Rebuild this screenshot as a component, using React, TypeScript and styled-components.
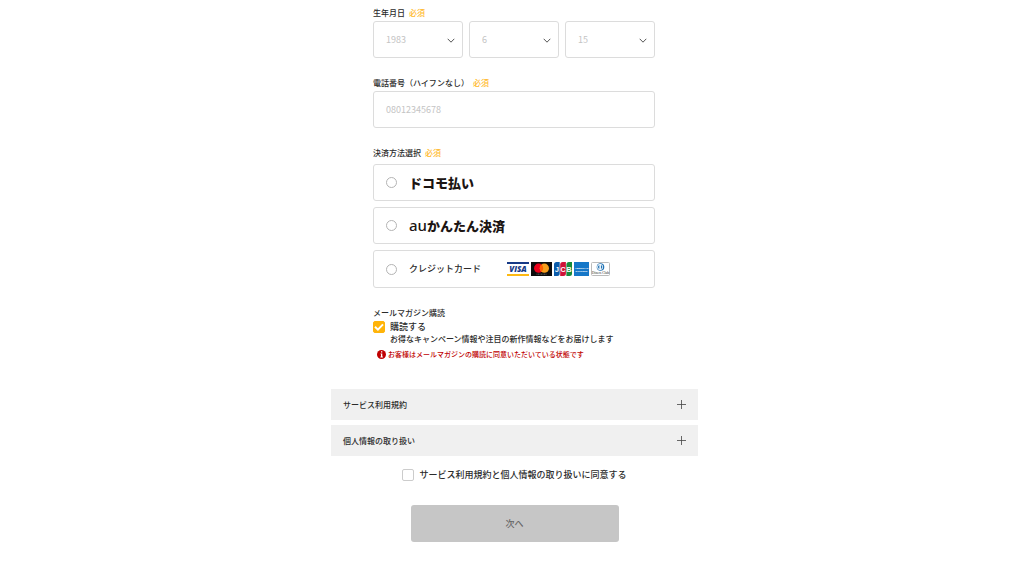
import React, { useState } from "react";
import styled, { createGlobalStyle } from "styled-components";

const GlobalStyle = createGlobalStyle`
  *, *::before, *::after { box-sizing: border-box; }
  body {
    margin: 0;
    background: #fff;
    color: #2b2b2b;
    font-family: "Noto Sans CJK JP", "Noto Sans", sans-serif;
    font-size: 8px;
    font-weight: 500;
    line-height: 12px;
  }
  button, input, select { font: inherit; color: inherit; margin: 0; }
`;

const Page = styled.main`
  display: flex;
  flex-direction: column;
  align-items: center;
  padding: 7px 0 27px 5px;
`;

const Form = styled.form`
  width: 100%;
  max-width: 367px;
  display: flex;
  flex-direction: column;
`;

const Fields = styled.div`
  display: flex;
  flex-direction: column;
  gap: 19px;
  padding: 0 43px 0 42px;
`;

const Group = styled.fieldset<{ $gap?: number }>`
  display: flex;
  flex-direction: column;
  gap: ${(p) => p.$gap ?? 2}px;
  min-width: 0;
  margin: 0;
  padding: 0;
  border: 0;
`;

const Label = styled.label`
  display: flex;
  gap: 4px;
`;

const Required = styled.span`
  color: #ffb92a;
`;

const SelectRow = styled.div`
  display: grid;
  grid-template-columns: repeat(3, 1fr);
  gap: 6px;
`;

const SelectBox = styled.div`
  position: relative;

  svg {
    position: absolute;
    right: 8px;
    top: 50%;
    margin-top: -2px;
    pointer-events: none;
  }
`;

const Select = styled.select`
  appearance: none;
  width: 100%;
  height: 37px;
  padding: 0 12px;
  border: 1px solid #dcdcdc;
  border-radius: 3px;
  background: #fff;
  color: #c4c4c4;
  font-size: 9px;
  font-weight: 400;
`;

const TextInput = styled.input`
  width: 100%;
  height: 37px;
  padding: 0 12px;
  border: 1px solid #dcdcdc;
  border-radius: 3px;
  background: #fff;
  font-size: 9px;
  font-weight: 400;

  &::placeholder { color: #c4c4c4; opacity: 1; }
`;

const Options = styled.div`
  display: flex;
  flex-direction: column;
  gap: 6px;
`;

const Option = styled.label<{ $tall?: boolean }>`
  display: flex;
  align-items: center;
  height: ${(p) => (p.$tall ? 38 : 37)}px;
  padding: 0 12px;
  gap: 12px;
  border: 1px solid #dcdcdc;
  border-radius: 3px;
  font-size: 9px;
`;

const Radio = styled.input`
  appearance: none;
  flex: none;
  width: 11px;
  height: 11px;
  border: 1px solid #b4b4b4;
  border-radius: 50%;
  background: #fff;

  &:checked { border: 3px solid #ffb400; }
`;

const Brand = styled.span`
  color: #1c1513;
  font-size: 13px;
  font-weight: 900;
  line-height: 16px;
`;

const BrandPrefix = styled.span`
  font-family: "Noto Sans", sans-serif;
  font-size: 15px;
  font-weight: 500;
`;

const Cards = styled.span`
  display: flex;
  gap: 2px;
  margin-left: 14px;
`;

const CheckLabel = styled.label`
  display: flex;
  align-items: center;
  gap: 5px;
  font-size: 9px;
`;

const Checkbox = styled.input`
  appearance: none;
  flex: none;
  width: 12px;
  height: 12px;
  border: 1px solid #ccc;
  border-radius: 2px;
  background: #fff;

  &:checked {
    border-color: #ffb40a;
    background: #ffb40a;
  }
`;

const CheckMark = styled.span`
  position: relative;
  display: flex;

  svg {
    position: absolute;
    inset: 0;
    pointer-events: none;
  }
`;

const Magazine = styled.section`
  display: flex;
  flex-direction: column;
  gap: 2px;
`;

const Note = styled.p`
  margin: 0;
  padding-left: 17px;
  line-height: 8px;
`;

const Notice = styled.p`
  display: flex;
  align-items: center;
  gap: 2px;
  margin: 3px 0 0;
  padding-left: 4px;
  color: #c00000;
  font-size: 7px;
`;

const Accordion = styled.div`
  display: flex;
  flex-direction: column;
  gap: 5px;
  margin-top: 29px;
`;

const AccordionButton = styled.button`
  display: flex;
  align-items: center;
  justify-content: space-between;
  height: 31px;
  padding: 0 12px;
  border: 0;
  background: #f0f0f0;
  text-align: left;
`;

const Agreement = styled.div`
  display: flex;
  justify-content: center;
  margin-top: 13px;
`;

const NextButton = styled.button`
  align-self: center;
  width: 100%;
  max-width: 208px;
  height: 37px;
  margin-top: 24px;
  border: 0;
  border-radius: 3px;
  background: #c6c6c6;
  color: #666;
  font-size: 9px;
`;

const Chevron = () => (
  <svg width="8" height="5" viewBox="0 0 8 5" fill="none" stroke="#555" aria-hidden="true">
    <path d="M.7.8 4 4.2 7.3.8" />
  </svg>
);

const Plus = () => (
  <svg width="9" height="9" viewBox="0 0 9 9" stroke="#444" strokeWidth=".8" aria-hidden="true">
    <path d="M4.5 0v9M0 4.5h9" />
  </svg>
);

const Tick = () => (
  <svg width="12" height="12" viewBox="0 0 12 12" fill="none" stroke="#fff" strokeWidth="2" aria-hidden="true">
    <path d="M2 5.8 4.9 8.6 10 3.4" />
  </svg>
);

const Alert = () => (
  <svg width="9" height="9" viewBox="0 0 9 9" aria-hidden="true">
    <circle cx="4.5" cy="4.5" r="4.5" fill="#c00000" />
    <path d="M4 1.3h1.3v1.3H4zM3.5 3.4h1.8v3.1h.6v.9H3.4v-.9H4V4.3h-.5z" fill="#fff" />
  </svg>
);

const Visa = () => (
  <svg width="22" height="14" viewBox="0 0 22 14" role="img" aria-label="VISA">
    <path fill="#fff" d="M0 0h22v14H0z" />
    <path fill="#173a86" d="M0 0h22v2H0z" />
    <path fill="#fdb913" d="M0 12h22v2H0z" />
    <text x="11" y="9.9" textAnchor="middle" fill="#173a86" fontFamily="Open Sans, sans-serif" fontSize="8" fontStyle="italic" fontWeight="800">VISA</text>
  </svg>
);

const Mastercard = () => (
  <svg width="21" height="14" viewBox="0 0 21 14" role="img" aria-label="Mastercard">
    <path fill="#0c0c0c" d="M0 0h21v14H0z" />
    <circle cx="7.6" cy="6.2" r="4.6" fill="#eb001b" />
    <circle cx="13.4" cy="6.2" r="4.6" fill="#f79e1b" />
    <path fill="#ff5f00" d="M10.5 2.6a4.6 4.6 0 0 1 0 7.2 4.6 4.6 0 0 1 0-7.2z" />
    <path stroke="#777" strokeWidth=".8" strokeDasharray="1 .5" d="M5.5 12.2h10" />
  </svg>
);

const Jcb = () => (
  <svg width="18" height="14" viewBox="0 0 18 14" role="img" aria-label="JCB">
    <path fill="#0b5cab" d="M2.5 0h3.2v11.5A2.5 2.5 0 0 1 3.2 14H0V2.5A2.5 2.5 0 0 1 2.5 0z" />
    <path fill="#cf1237" d="M8.7 0h3.2v11.5A2.5 2.5 0 0 1 9.4 14H6.2V2.5A2.5 2.5 0 0 1 8.7 0z" />
    <path fill="#168b3c" d="M14.9 0H18v11.5a2.5 2.5 0 0 1-2.5 2.5h-3.1V2.5A2.5 2.5 0 0 1 14.9 0z" />
    <g fill="#fff" fontFamily="Liberation Sans, sans-serif" fontWeight="700" fontSize="7" textAnchor="middle">
      <text x="3" y="9.5">J</text>
      <text x="9" y="9.5">C</text>
      <text x="15" y="9.5">B</text>
    </g>
  </svg>
);

const Amex = () => (
  <svg width="15" height="14" viewBox="0 0 15 14" role="img" aria-label="American Express">
    <path fill="#1577c8" d="M0 0h15v14H0z" />
    <g fill="#fff" fontFamily="Liberation Sans, sans-serif" fontWeight="700" fontSize="2.5" textAnchor="middle">
      <text x="7.5" y="6.5">AMERICAN</text>
      <text x="7.5" y="9.5">EXPRESS</text>
    </g>
  </svg>
);

const Diners = () => (
  <svg width="19" height="14" viewBox="0 0 19 14" role="img" aria-label="Diners Club">
    <rect x=".5" y=".5" width="18" height="13" rx="1" fill="#fff" stroke="#bbb" />
    <circle cx="9.5" cy="5" r="3.8" fill="#2173b5" />
    <circle cx="9.1" cy="5" r="2.9" fill="#fff" />
    <path fill="#2173b5" d="M8.4 3v4a2.1 2.1 0 0 1 0-4zM9.9 3a2.1 2.1 0 0 1 0 4z" />
    <text x="9.5" y="12" textAnchor="middle" fill="#222" fontFamily="Liberation Serif, serif" fontSize="3.5">Diners Club</text>
  </svg>
);

export default function App() {
  const [subscribed, setSubscribed] = useState(true);

  return (
    <>
      <GlobalStyle />
      <Page>
        <Form onSubmit={(e: React.FormEvent) => e.preventDefault()}>
          <Fields>
            <Group>
              <Label htmlFor="birth-year">生年月日<Required>必須</Required></Label>
              <SelectRow>
                <SelectBox>
                  <Select id="birth-year" defaultValue="1983"><option>1983</option></Select>
                  <Chevron />
                </SelectBox>
                <SelectBox>
                  <Select aria-label="月" defaultValue="6"><option>6</option></Select>
                  <Chevron />
                </SelectBox>
                <SelectBox>
                  <Select aria-label="日" defaultValue="15"><option>15</option></Select>
                  <Chevron />
                </SelectBox>
              </SelectRow>
            </Group>

            <Group>
              <Label htmlFor="phone">電話番号（ハイフンなし）<Required>必須</Required></Label>
              <TextInput id="phone" type="tel" placeholder="08012345678" />
            </Group>

            <Group $gap={5} aria-labelledby="payment-title">
              <Label as="div" id="payment-title">決済方法選択<Required>必須</Required></Label>
              <Options>
                <Option>
                  <Radio type="radio" name="payment" value="docomo" />
                  <Brand>ドコモ払い</Brand>
                </Option>
                <Option>
                  <Radio type="radio" name="payment" value="au" />
                  <Brand><BrandPrefix>au</BrandPrefix>かんたん決済</Brand>
                </Option>
                <Option $tall>
                  <Radio type="radio" name="payment" value="card" />
                  クレジットカード
                  <Cards>
                    <Visa />
                    <Mastercard />
                    <Jcb />
                    <Amex />
                    <Diners />
                  </Cards>
                </Option>
              </Options>
            </Group>

            <Magazine>
              <div>メールマガジン購読</div>
              <CheckLabel>
                <CheckMark>
                  <Checkbox type="checkbox" checked={subscribed} onChange={(e) => setSubscribed(e.target.checked)} />
                  {subscribed && <Tick />}
                </CheckMark>
                購読する
              </CheckLabel>
              <Note>お得なキャンペーン情報や注目の新作情報などをお届けします</Note>
              <Notice><Alert />お客様はメールマガジンの購読に同意いただいている状態です</Notice>
            </Magazine>
          </Fields>

          <Accordion>
            <AccordionButton type="button" aria-expanded="false">サービス利用規約<Plus /></AccordionButton>
            <AccordionButton type="button" aria-expanded="false">個人情報の取り扱い<Plus /></AccordionButton>
          </Accordion>

          <Agreement>
            <CheckLabel>
              <Checkbox type="checkbox" />
              サービス利用規約と個人情報の取り扱いに同意する
            </CheckLabel>
          </Agreement>

          <NextButton type="submit" disabled>次へ</NextButton>
        </Form>
      </Page>
    </>
  );
}
